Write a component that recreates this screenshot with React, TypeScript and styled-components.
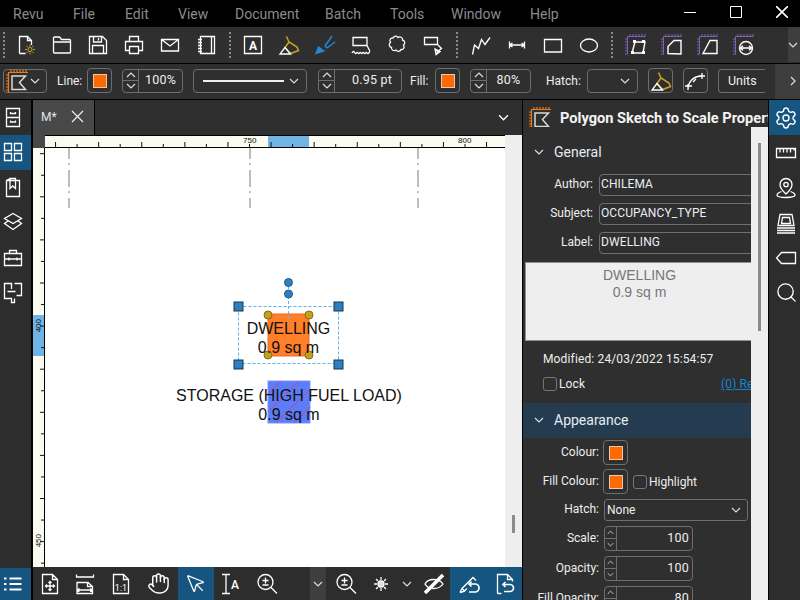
import React from 'react';
import styled, { createGlobalStyle } from 'styled-components';
import { Hand, MousePointer, Search, Settings } from 'lucide-react';

const Global = createGlobalStyle`
  html, body { margin: 0; padding: 0; background: #000; }
  * { box-sizing: border-box; }
`;

const Page = styled.div`
  width: 800px; height: 600px; overflow: hidden; display: flex; flex-direction: column;
  background: #000; font-family: Roboto, "Liberation Sans", sans-serif; font-size: 12px; color: #eee;
`;

/* Title bar */
const TitleBar = styled.div`
  height: 27px; flex: none; display: flex; align-items: center; background: #000;
  padding-left: 13px; color: #888b8f; font-size: 14px; position: relative;
`;
const MenuItem = styled.span<{ $w: number }>`line-height: 30px; width: ${p => p.$w}px; flex: none;`;
const WindowControls = styled.div`
  margin-left: auto; display: flex; height: 27px; width: 138px; flex: none; margin-top: -3px; margin-right: -5px;
`;
const WindowButton = styled.div`
  width: 46px; display: flex; align-items: center; justify-content: center;
`;

/* Toolbars */
const TopBar = styled.div`
  height: 36px; flex: none; display: flex; align-items: center; background: #2f2f2f; position: relative;
`;
const Grip = styled.div<{ $l: number; $r: number }>`
  width: 2px; height: 26px; margin: 0 ${p => p.$r}px 0 ${p => p.$l}px; flex: none;
  background: repeating-linear-gradient(to bottom, #8a8a8a 0 2px, transparent 2px 4px);
`;
const ToolCell = styled.div`
  width: 36px; height: 36px; flex: none; display: flex; align-items: center; justify-content: center;
`;
const MoreTools = styled.div`
  margin-left: auto; width: 12px; height: 35px; background: #3e3e3e; display: flex; align-items: center;
  overflow: hidden; margin-top: -1px;
`;
const PropBar = styled.div`
  height: 35px; flex: none; margin-top: 1px; display: flex; align-items: center; gap: 10px; padding-left: 3px;
  background: #2f2f2f; overflow: hidden;
`;
const Outlined = styled.div<{ $w: number; $ml?: number }>`
  width: ${p => p.$w}px; height: 24px; flex: none; margin-left: ${p => p.$ml ?? 0}px;
  border: 1px solid #6e6e6e; border-radius: 4px; display: flex; align-items: center; justify-content: center;
  margin-top: -2px;
`;
const ToolSelect = styled(Outlined)`justify-content: space-between; padding-right: 6px; padding-left: 1px;`;
const LineSelect = styled(Outlined)`justify-content: space-between; padding: 0 7px 0 9px;`;
const HatchPick = styled(Outlined)`justify-content: flex-end; padding-right: 7px;`;
const LineSample = styled.div`width: 81px; height: 2px; background: #eee;`;
const BarLabel = styled.span<{ $w: number; $ml?: number }>`
  width: ${p => p.$w}px; flex: none; margin: -2px -5px 0 ${p => p.$ml ?? 0}px; white-space: nowrap;
`;
const Swatch = styled.div`width: 14px; height: 14px; background: #ff6a00; border: 1px solid #e8c9b4;`;
const SwatchButton = styled(Outlined)`height: 25px;`;
const Units = styled(Outlined)`border-right: none; border-radius: 4px 0 0 4px; justify-content: flex-start; padding-left: 9px; font-size: 12.5px;`;
const BarEnd = styled.div`
  margin-left: auto; width: 36px; height: 36px; background: #3e3e3e; flex: none; display: flex;
  align-items: center; justify-content: center; margin-top: -2px;
`;

/* Spinner */
const SpinBox = styled.div<{ $w: number; $h: number; $ml?: number; $mt?: number }>`
  width: ${p => p.$w}px; height: ${p => p.$h}px; flex: none; margin-left: ${p => p.$ml ?? 0}px;
  margin-top: ${p => p.$mt ?? 0}px;
  border: 1px solid #6e6e6e; border-radius: 4px; display: flex; overflow: hidden;
`;
const SpinButtons = styled.div<{ $w: number }>`
  width: ${p => p.$w}px; flex: none; border-right: 1px solid #6e6e6e; display: flex; flex-direction: column;
`;
const SpinArrow = styled.div`
  flex: 1; display: flex; align-items: center; justify-content: center;
  & + & { border-top: 1px solid #6e6e6e; }
`;
const SpinValue = styled.div<{ $center?: boolean; $pad: number }>`
  flex: 1; display: flex; align-items: center; justify-content: ${p => p.$center ? 'center' : 'flex-end'};
  padding-right: ${p => p.$center ? 0 : p.$pad}px; padding-bottom: 2px; color: #eee; font-size: 12.5px; letter-spacing: .2px;
`;

/* Main */
const Main = styled.div`flex: 1; min-height: 0; display: flex; margin-top: 1px;`;
const LeftRail = styled.div`
  width: 33px; flex: none; border-right: 2px solid #000; background: #2d2d2d; display: flex; flex-direction: column;
`;
const RailCell = styled.div<{ $active?: boolean }>`
  height: 35px; flex: none; display: flex; align-items: center; justify-content: center; padding: 0 5px 2px 0;
  background: ${p => p.$active ? '#15557f' : 'transparent'};
`;
const RailSpacer = styled.div`flex: 1;`;
const RailBottom = styled(RailCell)`height: 32px; padding-bottom: 0;`;

const Center = styled.div`
  width: 490px; flex: none; border-right: 1px solid #000; display: flex; flex-direction: column;
`;
const TabStrip = styled.div`
  height: 35px; flex: none; background: #2f2f2f; display: flex; align-items: stretch;
`;
const Tab = styled.div`
  width: 62px; background: #484848; border-right: 1px solid #000; display: flex; align-items: center;
  padding: 0 0 2px 8px; gap: 14px; color: #dfe6ee; font-size: 12px;
`;
const TabChevron = styled.div`margin-left: auto; margin-right: 13px; display: flex; align-items: center;`;
const Workspace = styled.div`
  flex: 1; min-height: 0; display: grid; grid-template-columns: 12px 460px 17px; grid-template-rows: 13px 1fr;
`;
const Corner = styled.div`background: #484848;`;
const TopRuler = styled.div`
  position: relative; background: #fafaf0; border-top: 1px solid #000; border-bottom: 1px solid #000; overflow: hidden;
`;
const SideRuler = styled.div`
  position: relative; background: #fafaf0; border-right: 1px solid #000; overflow: hidden;
`;
const CanvasScroll = styled.div`
  grid-row: 1 / 3; grid-column: 3; background: #eeeeee; display: flex; flex-direction: column; align-items: center;
  padding-top: 380px;
`;
const CanvasThumb = styled.div`width: 3px; height: 18px; background: #8a8a8a;`;
const Canvas = styled.div`position: relative; background: #fff; overflow: hidden;`;
const RulerDraw = styled.svg`position: absolute; left: 0; top: 0;`;
const RulerMark = styled.span<{ $x: number }>`
  position: absolute; left: ${p => p.$x}px; top: 0; font: 8px "Liberation Sans", sans-serif; line-height: 9px; color: #111;
`;
const SideMark = styled.span<{ $y: number }>`
  position: absolute; left: 1px; top: ${p => p.$y}px; width: 9px; font: 8px "Liberation Sans", sans-serif;
  line-height: 9px; color: #111; writing-mode: vertical-rl; transform: rotate(180deg);
`;
const CanvasDraw = styled.svg`position: absolute; left: 0; top: 0;`;
const CanvasText = styled.div<{ $x: number; $y: number }>`
  position: absolute; left: ${p => p.$x}px; top: ${p => p.$y}px; transform: translateX(-50%);
  font: 16px/19px "Liberation Sans", sans-serif; color: #111; white-space: nowrap; text-align: center;
`;
const BottomBar = styled.div`
  height: 33px; flex: none; background: #2d2d2d; display: flex; align-items: stretch;
`;
const BottomCell = styled.div<{ $w: number; $active?: boolean; $alt?: boolean; $ml?: number }>`
  width: ${p => p.$w}px; flex: none; display: flex; align-items: center; justify-content: center;
  margin-left: ${p => p.$ml ?? 0}px;
  background: ${p => p.$active ? '#15557f' : p.$alt ? '#3e3e3e' : 'transparent'};
`;

/* Properties panel */
const Props = styled.div`
  width: 246px; flex: none; display: flex; flex-direction: column; background: #2f2f2f; overflow: hidden;
  border-right: 1px solid #000;
`;
const PropsTitle = styled.div`
  height: 27px; flex: none; display: flex; align-items: center; padding: 8px 0 0 5px; gap: 8px;
  font-size: 14.6px; font-weight: 700; color: #f4f4f4; white-space: nowrap; overflow: hidden;
`;
const PropsBody = styled.div`flex: 1; min-height: 0; display: flex;`;
const PropsContent = styled.div`width: 228px; flex: none; overflow: hidden; display: flex; flex-direction: column;`;
const PropsScroll = styled.div`
  width: 17px; flex: none; background: #eeeeee; display: flex; justify-content: center; padding-top: 16px;
`;
const PropsThumb = styled.div`width: 3px; height: 188px; background: #8a8a8a;`;
const SectionHead = styled.div<{ $active?: boolean; $mt: number; $mb?: number }>`
  height: 35px; flex: none; margin: ${p => p.$mt}px 0 ${p => p.$mb ?? 0}px; display: flex; align-items: center; gap: 10px; padding-left: 11px;
  padding-bottom: ${p => p.$active ? 2 : 0}px;
  font-size: 14px; color: #e6ecf2; background: ${p => p.$active ? '#253c50' : 'transparent'};
`;
const FieldRow = styled.div<{ $mt: number; $label: number }>`
  flex: none; display: flex; align-items: center; margin-top: ${p => p.$mt}px; gap: 5px;
  & > label { width: ${p => p.$label}px; flex: none; text-align: right; white-space: nowrap; color: #eee; padding-bottom: 2px; }
`;
const TextField = styled.div`
  width: 170px; height: 22px; flex: none; margin: 0 -30px 0 1px; border: 1px solid #6e6e6e; border-radius: 4px;
  padding: 0 0 2px 1px; display: flex; align-items: center; color: #e8eef5; letter-spacing: .1px;
`;
const Preview = styled.div`
  height: 79px; flex: none; margin: 8px 0 0 2px; background: #eeeeee; border: 1px solid #8f8f8f; border-right: none;
  color: #777; text-align: center; font: 14px/17px "Liberation Sans", sans-serif; padding: 4px 0 0 2px;
`;
const PlainRow = styled.div<{ $mt: number }>`
  height: 16px; flex: none; margin-top: ${p => p.$mt}px; padding-left: 20px; display: flex; align-items: center;
  white-space: nowrap; justify-content: space-between; letter-spacing: .14px;
`;
const CheckGroup = styled.div`display: flex; align-items: center; gap: 2px;`;
const CheckBox = styled.div`width: 14px; height: 14px; flex: none; border: 1px solid #777; border-radius: 3px;`;
const RefLink = styled.span`color: #0f86d0; text-decoration: underline; width: 30px; overflow: hidden;`;
const HatchSelect = styled.div`
  width: 144px; height: 22px; flex: none; border: 1px solid #6e6e6e; border-radius: 3px; display: flex;
  align-items: center; justify-content: space-between; padding: 0 6px 1px 2px;
`;
const SwatchBox = styled.div`
  width: 25px; height: 25px; flex: none; margin-left: -1px; border: 1px solid #6e6e6e; border-radius: 4px;
  display: flex; align-items: center; justify-content: center;
`;
const RightRail = styled.div`
  flex: 1; background: #2d2d2d; display: flex; flex-direction: column;
`;
const RightCell = styled(RailCell)`padding: 0 0 0 3px;`;

/* Icons */
const Svg = styled.svg.attrs({ viewBox: '0 0 24 24', fill: 'none' })`
  width: 24px; height: 24px; stroke: #fff; stroke-width: 1.3; flex: none; display: block;
`;
const FlagSvg = styled.svg.attrs({ viewBox: '0 0 24 24', fill: 'none' })`
  width: 24px; height: 24px; flex: none; display: block;
`;
const BlueSvg = styled(Svg)`stroke: #2388d6;`;
const Chev = ({ dir = 'down', size = 10, color = '#ddd' }: { dir?: 'down' | 'up' | 'right'; size?: number; color?: string }) => (
  <svg width={size} height={size} viewBox="0 0 10 10" fill="none" stroke={color} strokeWidth="1.2">
    {dir === 'down' && <path d="M1 3l4 4 4-4" />}
    {dir === 'up' && <path d="M1 7l4-4 4 4" />}
    {dir === 'right' && <path d="M3 1l4 4-4 4" />}
  </svg>
);
const GOLD = '#c9a227';
const Spark = () => (
  <g stroke={GOLD} strokeWidth="1">
    <circle cx="16" cy="16.5" r="2" />
    <path d="M16 11.5v2M16 19.5v2M11 16.5h2M19 16.5h2M12.5 13l1.5 1.5M19.5 13L18 14.5M12.5 20l1.5-1.5M19.5 20L18 18.5" />
  </g>
);
const HighlightPen = () => (
  <Svg>
    <path d="M9.5 3.5L12 9l8 5 1.5 3.5-8 3L8 14.5 12 9" stroke={GOLD} strokeWidth="1.5" />
    <path d="M8 14.5L3 21h10.5z" />
  </Svg>
);
const BluePen = () => (
  <BlueSvg>
    <path d="M19 3l-7 10M22 9l-8 6M12 13l2 2" strokeWidth="1.5" />
    <path d="M3 20.5l2.5-6.5 5.5 4z" fill="#2388d6" />
  </BlueSvg>
);
const Purple = () => (
  <path stroke="#7e60b8" strokeWidth="1" d="M3.5 3.5h18M3.5 3.5v18M6 1v2M9 1v2M12 1v2M15 1v2M18 1v2M21 1v2M1 6h2M1 9h2M1 12h2M1 15h2M1 18h2M1 21h2" />
);
const ScaleFlag = () => (
  <FlagSvg>
    <path stroke="#f07a18" strokeWidth="1.2" d="M3 3.5h20M3.5 3v21M6 1v2M9 1v2M12 1v2M15 1v2M18 1v2M21 1v2M1 6h2M1 9h2M1 12h2M1 15h2M1 18h2M1 21h2" />
    <path stroke="#d9d9d9" strokeWidth="1.5" d="M7 7h13.5l-6 6.5 6 7H7z" />
  </FlagSvg>
);
const toolIcons = {
  newDoc: <Svg><path d="M5.5 20.5v-17h8l4 4V12M13.5 3.5v4h4M5.5 20.5h6" /><Spark /></Svg>,
  open: <Svg><path d="M3.5 5a1 1 0 0 1 1-1h5l2 2.5h8a1 1 0 0 1 1 1v11.5a1 1 0 0 1-1 1h-15a1 1 0 0 1-1-1zM3.5 9h17" /></Svg>,
  save: <Svg><path d="M3.5 3.5h13l4 4v13h-17zM7.5 3.5v5.5h8V3.5M12.5 5v2.5M6.5 20.5v-8h11v8" /></Svg>,
  print: <Svg><path d="M7.5 8.5v-5h9v5M7 17.5H3.5v-9h17v9H17M7.5 13.5h9v7h-9z" /></Svg>,
  mail: <Svg><path d="M3.5 6.5h17v11.5h-17zM3.5 6.5l8.5 6.5 8.5-6.5" /></Svg>,
  note: <Svg><path d="M6.5 3.5h14v17h-14zM17.5 3.5v17M4 6.5h4M4 9.5h4M4 12.5h4M4 15.5h4M4 18.5h4" /></Svg>,
  textBox: (
    <Svg>
      <path d="M3.5 3.5h17v17h-17z" />
      <text x="12" y="16.5" textAnchor="middle" fontSize="12" fontWeight="700" fontFamily="Roboto, sans-serif" fill="#fff" stroke="none">A</text>
    </Svg>
  ),
  highlight: <HighlightPen />,
  pen: <BluePen />,
  cloudCall: <Svg><path d="M4 4.5h14v8H4zM18 12.5l3 6M3 20c1-2 2-2 3 0s2-2 3 0 2-2 3 0 2-2 3 0 2-2 3 0 2-1 3-1" /></Svg>,
  cloud: <Svg><path d="M8 5c1-2.5 4-2.5 5-.5 2-1.5 5 0 4.5 2.5 2.5.5 3 4 1 5 1.5 2 0 5-2.5 4.5-1 2.5-4 2.5-5 .5-2 1.5-5 0-4.5-2.5-2.5-.5-3-4-1-5-1.5-2 0-5 2.5-4.5z" /></Svg>,
  callout: <Svg><path d="M3.5 4.5h13v7h-13zM16.5 11.5l4 4-5 4M14 16l1 5.5 4-3z" /></Svg>,
  polyline: <Svg><path d="M3.5 21.5l2-9.5 4 3.5 3-9 3.500 5 5-7" /></Svg>,
  dimension: <Svg><path d="M4 12h16M4.5 8.5v7M19.5 8.5v7M4.5 12l3-2M4.5 12l3 2M19.5 12l-3-2M19.5 12l-3 2" /></Svg>,
  rect: <Svg><path d="M3.5 6.5h17v12.5h-17z" /></Svg>,
  ellipse: <Svg><ellipse cx="12" cy="12.5" rx="8.5" ry="6.5" /></Svg>,
  s1: <Svg><Purple /><path d="M8 20l3-11h10l-2 11zM8 20h11" strokeWidth="1.4" /><path d="M9 7h3v3H9zM18 7h3v3h-3zM7 18h3v3H7zM18 18h3v3h-3z" fill="#fff" stroke="none" /></Svg>,
  s2: <Svg><Purple /><path d="M8 20.5v-7l6-6h7v13.5z" strokeWidth="1.4" /></Svg>,
  s3: <Svg><Purple /><path d="M7 20.5l7-13h7v13z" strokeWidth="1.4" /></Svg>,
  s4: <Svg><Purple /><circle cx="14" cy="15" r="6.5" strokeWidth="1.4" /><path d="M8 15h12M11 12.8L8.5 15l2.5 2.2M17 12.8L19.5 15 17 17.2" strokeWidth="1.5" /></Svg>,
};
const railIcons = {
  cabinet: <Svg><path d="M5.5 3.5h13v18h-13zM5.5 12.5h13M9.5 7v1.5h5V7M9.5 15.5V17h5v-1.5" /></Svg>,
  grid: <Svg><path d="M3.5 3.5h7v7h-7zM13.5 3.5h7v7h-7zM3.5 13.5h7v7h-7zM13.5 13.5h7v7h-7z" /></Svg>,
  book: <Svg><path d="M5.5 5.5h13v16h-13zM9 3.5h5.5v10L11.7 11 9 13.5zM5.5 5.5L9 3.5" /></Svg>,
  layers: <Svg><path d="M12 3.5l8.5 5-8.5 5-8.5-5zM7 11l-3.5 2.5 8.5 6 8.5-6L17 11" /></Svg>,
  case: <Svg><path d="M3.5 8.5h17v12h-17zM3.5 14h17M8.5 8.5v-3h7v3M8 12.5v3M16 12.5v3" /></Svg>,
  plan: <Svg><path d="M10.5 9V3.5h-7v15h7v4h3v-4M13.5 3.5h7v12h-5M6.5 11.5h8" /></Svg>,
  list: <Svg><path d="M8.5 6.5h12M8.5 12h12M8.5 17.5h12" strokeWidth="2" /><path d="M3 6.5h2.5M3 12h2.5M3 17.5h2.5" strokeWidth="2" /></Svg>,
  ruler: <Svg><path d="M2.5 7.5h19v9h-19zM6 7.5v4M9.5 7.5v4M13 7.5v4M16.5 7.5v4M20 7.5v2" /></Svg>,
  pin: <Svg><path d="M12 2.5a6 6 0 0 1 6 6c0 4-6 9.5-6 9.5s-6-5.5-6-9.5a6 6 0 0 1 6-6z" /><circle cx="12" cy="8.5" r="2.2" /><path d="M7.5 15.5c-3 1-4.5 2.2-4.5 3.5 0 2 4 2.5 9 2.5s9-.5 9-2.5c0-1.3-1.5-2.5-4.5-3.5" /></Svg>,
  stack: <Svg><path d="M6 3.5h12l2 11H4zM8.5 6.5h7l1 6h-9zM3 17h18M3 19.5h18M3 22h18" /></Svg>,
  tag: <Svg><path d="M7.5 6.5h14v11h-14L2.5 12z" /></Svg>,
};
const bottomIcons = {
  fit: <Svg><path d="M4.5 21.5v-19h10l5 5v14zM14.5 2.5v5h5M12 9.5v9M7.5 14h9M10.5 11L12 9.5l1.5 1.5M10.5 17l1.5 1.5 1.5-1.5M9 12.5L7.5 14 9 15.5M15 12.5l1.5 1.5-1.5 1.5" /></Svg>,
  width: <Svg><path d="M3.5 2.5v2.5h17V2.5M4 21.5v-11h11l4.5 4v7zM14.5 10.5v4h5M4 18h15M4 18l2.5-1.5M4 18l2.5 1.5M19.5 18l-2.5-1.5M19.5 18L17 19.5" /></Svg>,
  actual: (
    <Svg>
      <path d="M4.5 21.5v-19h10l5 5v14zM14.5 2.5v5h5" />
      <text x="12" y="18.5" textAnchor="middle" fontSize="9" fontFamily="Roboto, sans-serif" fill="#fff" stroke="none">1:1</text>
    </Svg>
  ),
  textSel: (
    <Svg>
      <path d="M2 2.5h8M6 2.5v19M2 21.5h8" />
      <text x="15" y="17" textAnchor="middle" fontSize="12" fontWeight="500" fontFamily="Roboto, sans-serif" fill="#fff" stroke="none">A</text>
    </Svg>
  ),
  zoom: <Svg><circle cx="10.5" cy="10" r="7.5" /><path d="M16 15.5l6 6M7.5 8.5h6M10.5 5.5v6M7.5 13h6" /></Svg>,
  sun: <Svg><circle cx="12" cy="12" r="3" fill="#ddd" /><path d="M12 5v3M12 16v3M5 12h3M16 12h3M7 7l2 2M15 15l2 2M17 7l-2 2M9 15l-2 2" /></Svg>,
  snap: <Svg><path d="M3 12c3-6 14-6 18 0-4 6-15 6-18 0z" /><path d="M3 21L21 3" strokeWidth="3.5" /></Svg>,
  undoA: <Svg><path d="M3 20.5l2-4 11-11 3 3M3 20.5l4-1 3-3M5 16.5l3 3" /><path d="M12 12h6a3.5 3.5 0 0 1 0 8h-6M14.5 9.5L12 12l2.5 2.5" strokeWidth="1.7" /></Svg>,
  undoB: <Svg><path d="M4.5 21.5v-19h10l5 5v2M14.5 2.5v5h5M4.5 21.5h4" /><path d="M10 12.5h7a3.5 3.5 0 0 1 0 7h-6M12.5 10l-2.5 2.5 2.5 2.5" strokeWidth="1.7" /></Svg>,
};

const Spinner = ({ w, h = 24, value, center, arrow = 16, ml, mt, size = 10, pad = 9 }: { w: number; h?: number; value: string; center?: boolean; arrow?: number; ml?: number; mt?: number; size?: number; pad?: number }) => (
  <SpinBox $w={w} $h={h} $ml={ml} $mt={mt}>
    <SpinButtons $w={arrow}>
      <SpinArrow><Chev dir="up" size={size} /></SpinArrow>
      <SpinArrow><Chev size={size} /></SpinArrow>
    </SpinButtons>
    <SpinValue $center={center} $pad={pad}>{value}</SpinValue>
  </SpinBox>
);

const topTicks = Array.from({ length: 22 }, (_, i) => 249.5 - 45 + (i - 9) * 21.55);
const sideTicks = Array.from({ length: 20 }, (_, i) => 153.7 - 148 + i * 21.55);

const menu: [string, number][] = [
  ['Revu', 60], ['File', 52], ['Edit', 53], ['View', 57], ['Document', 90],
  ['Batch', 65], ['Tools', 61], ['Window', 79], ['Help', 40],
];

const SelHandle = ({ x, y }: { x: number; y: number }) => (
  <rect x={x - 4.5} y={y - 4.5} width="9" height="9" fill="#2f7fbe" stroke="#12364f" strokeWidth="1" />
);
const Node = ({ x, y }: { x: number; y: number }) => (
  <circle cx={x} cy={y} r="4" fill="#c79f1e" stroke="#8a6c10" strokeWidth="1" />
);
const Rot = ({ x, y }: { x: number; y: number }) => (
  <circle cx={x} cy={y} r="4" fill="#2f7fbe" stroke="#1d5a8a" strokeWidth="1" />
);

export default function App() {
  return (
    <Page>
      <Global />
      <TitleBar>
        {menu.map(([m, w]) => <MenuItem key={m} $w={w}>{m}</MenuItem>)}
        <WindowControls>
          <WindowButton><svg width="12" height="12" viewBox="0 0 12 12" stroke="#fff" strokeWidth="1"><path d="M0 6.5h12" /></svg></WindowButton>
          <WindowButton><svg width="12" height="12" viewBox="0 0 12 12" fill="none" stroke="#fff" strokeWidth="1"><path d="M.5 .5h11v11H.5z" /></svg></WindowButton>
          <WindowButton><svg width="12" height="12" viewBox="0 0 12 12" fill="none" stroke="#fff" strokeWidth="1.6"><path d="M0 0l12 12M12 0L0 12" /></svg></WindowButton>
        </WindowControls>
      </TitleBar>

      <TopBar>
        <Grip $l={3} $r={3} />
        <ToolCell>{toolIcons.newDoc}</ToolCell>
        <ToolCell>{toolIcons.open}</ToolCell>
        <ToolCell>{toolIcons.save}</ToolCell>
        <ToolCell>{toolIcons.print}</ToolCell>
        <ToolCell>{toolIcons.mail}</ToolCell>
        <ToolCell>{toolIcons.note}</ToolCell>
        <Grip $l={5} $r={4} />
        <ToolCell>{toolIcons.textBox}</ToolCell>
        <ToolCell>{toolIcons.highlight}</ToolCell>
        <ToolCell>{toolIcons.pen}</ToolCell>
        <ToolCell>{toolIcons.cloudCall}</ToolCell>
        <ToolCell>{toolIcons.cloud}</ToolCell>
        <ToolCell>{toolIcons.callout}</ToolCell>
        <Grip $l={5} $r={5} />
        <ToolCell>{toolIcons.polyline}</ToolCell>
        <ToolCell>{toolIcons.dimension}</ToolCell>
        <ToolCell>{toolIcons.rect}</ToolCell>
        <ToolCell>{toolIcons.ellipse}</ToolCell>
        <Grip $l={4} $r={5} />
        <ToolCell>{toolIcons.s1}</ToolCell>
        <ToolCell>{toolIcons.s2}</ToolCell>
        <ToolCell>{toolIcons.s3}</ToolCell>
        <ToolCell>{toolIcons.s4}</ToolCell>
        <MoreTools><Chev /></MoreTools>
      </TopBar>

      <PropBar>
        <ToolSelect $w={44}><ScaleFlag /><Chev /></ToolSelect>
        <BarLabel $w={25}>Line:</BarLabel>
        <SwatchButton $w={25}><Swatch /></SwatchButton>
        <Spinner w={61} value="100%" center mt={-2} />
        <LineSelect $w={114}><LineSample /><Chev /></LineSelect>
        <Spinner w={84} value="0.95 pt" ml={1} mt={-2} />
        <BarLabel $w={20} $ml={-2}>Fill:</BarLabel>
        <SwatchButton $w={25}><Swatch /></SwatchButton>
        <Spinner w={61} value="80%" center mt={-2} />
        <BarLabel $w={36} $ml={5}>Hatch:</BarLabel>
        <HatchPick $w={51}><Chev /></HatchPick>
        <SwatchButton $w={25}><HighlightPen /></SwatchButton>
        <SwatchButton $w={25}>
          <Svg><path d="M4 21c0-8 5-14 14-14M21 7h-6M4 21v-6M1 17h7M12 10l-3 3M18 4v6" /></Svg>
        </SwatchButton>
        <Units $w={47}>Units</Units>
        <BarEnd><Chev dir="right" /></BarEnd>
      </PropBar>

      <Main>
        <LeftRail>
          <RailCell>{railIcons.cabinet}</RailCell>
          <RailCell $active>{railIcons.grid}</RailCell>
          <RailCell>{railIcons.book}</RailCell>
          <RailCell>{railIcons.layers}</RailCell>
          <RailCell>{railIcons.case}</RailCell>
          <RailCell>{railIcons.plan}</RailCell>
          <RailSpacer />
          <RailBottom $active>{railIcons.list}</RailBottom>
        </LeftRail>

        <Center>
          <TabStrip>
            <Tab>
              M*
              <svg width="13" height="13" viewBox="0 0 13 13" stroke="#eee" strokeWidth="1.2"><path d="M1 1l11 11M12 1L1 12" /></svg>
            </Tab>
            <TabChevron><Chev size={11} color="#fff" /></TabChevron>
          </TabStrip>
          <Workspace>
            <Corner />
            <TopRuler>
              <RulerDraw width="460" height="11">
                <rect x="223" y="0" width="41" height="11" fill="#6fb4e4" />
                {topTicks.map((x, i) => (
                  <line key={i} x1={x} x2={x} y1={i % 2 ? 8 : 6} y2="11" stroke="#111" strokeWidth="1" />
                ))}
              </RulerDraw>
              <RulerMark $x={198}>750</RulerMark>
              <RulerMark $x={413}>800</RulerMark>
            </TopRuler>
            <CanvasScroll><CanvasThumb /></CanvasScroll>
            <SideRuler>
              <RulerDraw width="11" height="420">
                <rect x="0" y="167" width="11" height="41" fill="#6fb4e4" />
                {sideTicks.map((y, i) => (
                  <line key={i} y1={y} y2={y} x1={i % 2 ? 8 : 7} x2="11" stroke="#111" strokeWidth="1" />
                ))}
              </RulerDraw>
              <SideMark $y={171}>400</SideMark>
              <SideMark $y={386}>450</SideMark>
            </SideRuler>
            <Canvas>
              <CanvasDraw width="460" height="420" viewBox="45 148 460 420">
                {[69, 250, 418].map(x => (
                  <line key={x} x1={x} x2={x} y1="148" y2="208" stroke="#a8a8a8" strokeWidth="1.5" strokeDasharray="11 4 2 5 17 4 2 5 10" />
                ))}
                <rect x="268" y="314" width="41" height="42" fill="#ff7f2a" stroke="#f26a10" />
                <rect x="268" y="381" width="42" height="42" fill="#5c7cfa" stroke="#7d95f7" />
                <g stroke="#c2497f" strokeWidth="1">
                  <path d="M268 394l13-13M268 412l31-31M276 423l34-34M294 423l16-16" />
                </g>
                <rect x="238.5" y="306.5" width="100" height="57" fill="none" stroke="#5ab4ef" strokeDasharray="3 2" />
                <line x1="288.5" x2="288.5" y1="286" y2="320" stroke="#5ab4ef" strokeDasharray="3 2" />
                <SelHandle x={238.5} y={306.5} />
                <SelHandle x={338.5} y={306.5} />
                <SelHandle x={238.5} y={364.5} />
                <SelHandle x={338.5} y={364.5} />
                <Node x={268} y={315} />
                <Node x={309} y={315} />
                <Node x={268} y={355} />
                <Node x={309} y={355} />
                <Rot x={288.5} y={282.5} />
                <Rot x={288.5} y={294} />
              </CanvasDraw>
              <CanvasText $x={243.5} $y={171}>DWELLING<br />0.9 sq m</CanvasText>
              <CanvasText $x={244} $y={238}>STORAGE (HIGH FUEL LOAD)<br />0.9 sq m</CanvasText>
            </Canvas>
          </Workspace>
          <BottomBar>
            <BottomCell $w={34}>{bottomIcons.fit}</BottomCell>
            <BottomCell $w={36}>{bottomIcons.width}</BottomCell>
            <BottomCell $w={36}>{bottomIcons.actual}</BottomCell>
            <BottomCell $w={39}><Hand size={23} color="#fff" strokeWidth={1.5} /></BottomCell>
            <BottomCell $w={36} $active><MousePointer size={22} color="#fff" strokeWidth={1.4} /></BottomCell>
            <BottomCell $w={35}>{bottomIcons.textSel}</BottomCell>
            <BottomCell $w={36}>{bottomIcons.zoom}</BottomCell>
            <BottomCell $w={16} $ml={25} $alt><Chev /></BottomCell>
            <BottomCell $w={40}>{bottomIcons.zoom}</BottomCell>
            <BottomCell $w={30}>{bottomIcons.sun}</BottomCell>
            <BottomCell $w={22}><Chev /></BottomCell>
            <BottomCell $w={32}>{bottomIcons.snap}</BottomCell>
            <BottomCell $w={38} $active>{bottomIcons.undoA}</BottomCell>
            <BottomCell $w={34} $active>{bottomIcons.undoB}</BottomCell>
          </BottomBar>
        </Center>

        <Props>
          <PropsTitle><ScaleFlag />Polygon Sketch to Scale Properties</PropsTitle>
          <PropsBody>
            <PropsContent>
              <SectionHead $mt={7} $mb={5}><Chev />General</SectionHead>
              <FieldRow $mt={0} $label={70}><label>Author:</label><TextField>CHILEMA</TextField></FieldRow>
              <FieldRow $mt={7} $label={70}><label>Subject:</label><TextField>OCCUPANCY_TYPE</TextField></FieldRow>
              <FieldRow $mt={7} $label={70}><label>Label:</label><TextField>DWELLING</TextField></FieldRow>
              <Preview>DWELLING<br />0.9 sq m</Preview>
              <PlainRow $mt={10}>Modified: 24/03/2022 15:54:57</PlainRow>
              <PlainRow $mt={9}>
                <CheckGroup><CheckBox />Lock</CheckGroup>
                <RefLink>(0) Re</RefLink>
              </PlainRow>
              <SectionHead $active $mt={11}><Chev />Appearance</SectionHead>
              <FieldRow $mt={2} $label={76}><label>Colour:</label><SwatchBox><Swatch /></SwatchBox></FieldRow>
              <FieldRow $mt={4} $label={76}>
                <label>Fill Colour:</label><SwatchBox><Swatch /></SwatchBox>
                <CheckGroup><CheckBox />Highlight</CheckGroup>
              </FieldRow>
              <FieldRow $mt={5} $label={76}><label>Hatch:</label><HatchSelect>None<Chev /></HatchSelect></FieldRow>
              <FieldRow $mt={5} $label={76}><label>Scale:</label><Spinner w={89} h={25} value="100" arrow={12} size={7} pad={3} /></FieldRow>
              <FieldRow $mt={5} $label={76}><label>Opacity:</label><Spinner w={89} h={25} value="100" arrow={12} size={7} pad={3} /></FieldRow>
              <FieldRow $mt={5} $label={76}><label>Fill Opacity:</label><Spinner w={89} h={25} value="80" arrow={12} size={7} pad={3} /></FieldRow>
            </PropsContent>
            <PropsScroll><PropsThumb /></PropsScroll>
          </PropsBody>
        </Props>

        <RightRail>
          <RightCell $active><Settings size={24} color="#fff" strokeWidth={1.4} /></RightCell>
          <RightCell>{railIcons.ruler}</RightCell>
          <RightCell>{railIcons.pin}</RightCell>
          <RightCell>{railIcons.stack}</RightCell>
          <RightCell>{railIcons.tag}</RightCell>
          <RightCell><Search size={23} color="#fff" strokeWidth={1.4} /></RightCell>
        </RightRail>
      </Main>
    </Page>
  );
}
